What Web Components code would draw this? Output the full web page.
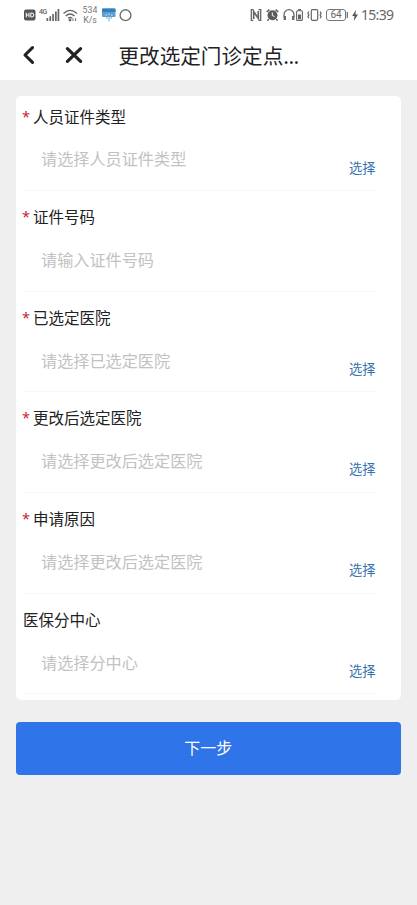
<!DOCTYPE html>
<html lang="zh-CN">
<head>
<meta charset="utf-8">
<title>更改选定门诊定点</title>
<style>
html,body{margin:0;height:100%}
body{background:#efefef;font-family:"Noto Sans CJK SC",sans-serif;overflow:hidden}
</style>
</head>
<body>
<clinic-page></clinic-page>
<script>
function define(name, html){
  const t=document.createElement('template');
  t.innerHTML=html;
  customElements.define(name,class extends HTMLElement{
    constructor(){
      super();
      this.attachShadow({mode:'open'}).appendChild(t.content.cloneNode(true));
    }
  });
}

define('status-bar',`
<style>
:host{display:flex;justify-content:space-between;box-sizing:border-box;height:30px;padding:6px 24px 0 24px;color:#666;font-family:Roboto,sans-serif}
.g{display:flex;height:18px;align-items:center}
svg{display:block;flex:none;overflow:visible}
.net{font-size:8.8px;line-height:10px;text-align:center;width:16px;margin:0 4px 0 4px;color:#777;height:20px;white-space:nowrap}
.g4{font-size:7px;line-height:7px;width:8px;height:12px;font-weight:500;letter-spacing:-.6px;margin-left:3px}
.bat{display:flex;align-items:center;justify-content:center;box-sizing:border-box;width:20px;height:12px;border:1px solid #777;border-radius:3px;font-size:10px;line-height:10px;margin-left:4px}
.time{font:14px/18px "Noto Sans",sans-serif;letter-spacing:-.7px;width:32px;margin-left:3px;white-space:nowrap}
</style>
<div class="g">
<svg width="12" height="12" viewBox="0 0 12 12"><rect y=".5" width="11.5" height="11" rx="2" fill="#555"/><path d="M2.3 3.7v4.6M5 3.7v4.6M2.3 6H5M6.8 4v4h1a2 2 0 0 0 0-4z" stroke="#fff" stroke-width="1" fill="none"/></svg>
<span class="g4">4G</span>
<svg width="12" height="12" viewBox="0 0 12 12" fill="#666"><path d="M-.5 9h1.7v3h-1.7zM2.4 7.2h1.7V12H2.4zM5.2 5h1.7v7H5.2zM8 2.6h1.7V12H8zM10.6 0h1.7v12h-1.7z"/></svg>
<svg width="15" height="13" viewBox="0 0 15 13" style="margin-left:4px" fill="none" stroke="#666" stroke-width="1.3"><path d="M.5 4.5Q7-1.8 14 4.5M2.8 7Q7 3 11.5 7M5 9.3q2.2-1.8 4.3 0"/><circle cx="7" cy="11" r=".8" fill="#666"/><path d="M10 12V9.5M12.6 9.2v2.8" stroke-width="1"/></svg>
<div class="net">534<br>K/s</div>
<svg width="14" height="14" viewBox="0 0 14 14"><rect y=".5" width="13.5" height="8.5" rx="1" fill="#5a9fd2"/><path d="M0 1.5a1 1 0 0 1 1-1h11.5a1 1 0 0 1 1 1V4H0z" fill="#2f80bd"/><path d="M3.5 7h1.5M6.3 6.3h1.5M9 7h1.5" stroke="#d3e9f7"/><path d="M7 8.5V13.5M4.8 9v1.8M9.2 9v1.8" stroke="#83b9dc" stroke-width="1.2"/></svg>
<svg width="13" height="13" viewBox="0 0 13 13" style="margin-left:2.5px"><circle cx="6.5" cy="6.2" r="5.4" fill="none" stroke="#707070" stroke-width="1.4"/></svg>
</div>
<div class="g">
<svg width="12" height="12" viewBox="0 0 12 12" fill="none" stroke="#666"><path d="M3.5.7H1.3V11.3h2M8.5.7h2.2v10.6h-2" stroke-width="1.3"/><path d="M3.7 10V2.5L8.3 9.5V2" stroke-width="1.7"/></svg>
<svg width="13" height="12" viewBox="0 0 13 12" style="margin-left:4px"><circle cx="6.5" cy="6.3" r="5" fill="#5b5b5b"/><path d="M.6 3L3.4.7M12.4 3L9.6.7M2.8 10l-1.3 1.6M10.2 10l1.3 1.6" stroke="#5b5b5b" stroke-width="1.5"/><path d="M6.3 3.5v3l2.2 1" stroke="#fff" fill="none"/></svg>
<svg width="12" height="12" viewBox="0 0 12 12" style="margin-left:3.5px" fill="none" stroke="#666"><path d="M1 8V5.7a5 5 0 0 1 10 0V8" stroke-width="1.3"/><path d="M1.8 7v4M10.2 7v4" stroke-width="2.3"/></svg>
<svg width="7" height="12" viewBox="0 0 7 12" style="margin-left:1px"><rect x=".6" y="1.8" width="5.8" height="9.6" rx="1" fill="none" stroke="#666" stroke-width="1.1"/><path d="M2 .7h3" stroke="#666" stroke-width="1.4"/><path d="M2 5.5h3v4.7H2z" fill="#666"/></svg>
<svg width="15" height="12" viewBox="0 0 15 12" style="margin-left:4.5px" fill="none" stroke="#666"><rect x="4.3" y=".7" width="6.4" height="10.6" rx="1.2" stroke-width="1.2"/><path d="M1.9 2.5l-1 1.7 1 1.7-1 1.7 1 1.7M13.1 2.5l1 1.7-1 1.7 1 1.7-1 1.7" stroke-width="1.2"/></svg>
<div class="bat">64</div>
<svg width="3" height="6" viewBox="0 0 3 6"><path d="M1.3 0v6" stroke="#666" stroke-width="1.2"/></svg>
<svg width="6" height="11" viewBox="0 0 6 11" style="margin-left:3px"><path d="M3.8 0L.2 6h2.3l-.7 5L6 4.5H3.5z" fill="#555"/></svg>
<span class="time">15:39</span>
</div>`);

define('nav-bar',`
<style>
:host{display:flex;align-items:center;box-sizing:border-box;height:50px;padding-left:22px;color:#222}
svg{display:block;flex:none}
h1{margin:0 0 0 35.5px;font-size:20.6px;line-height:30px;font-weight:400;white-space:nowrap;padding-bottom:1px}
.dots{letter-spacing:-.6px}
</style>
<svg width="13" height="20" viewBox="0 0 13 20"><path d="M10.5 2.6L3 10l7.5 7.4" fill="none" stroke="#222" stroke-width="3.1" stroke-linecap="round" stroke-linejoin="round"/></svg>
<svg width="18" height="18" viewBox="0 0 18 18" style="margin-left:30px"><path d="M2.4 2.6l13.2 12.8M15.6 2.6L2.4 15.4" stroke="#222" stroke-width="3.2" stroke-linecap="round"/></svg>
<h1><slot></slot><span class="dots">...</span></h1>`);

define('form-card',`
<style>
:host{display:block;box-sizing:border-box;height:603.5px;margin:16px 16.5px 0 16px;background:#fff;border-radius:5px}
</style><slot></slot>`);

define('form-field',`
<style>
:host{display:grid;grid-template-rows:42px 53px;box-sizing:border-box;height:100.65px;padding:0 25px 0 7px}
.label{display:flex;align-items:center;box-sizing:border-box;padding-bottom:3px;font-size:15.5px;line-height:24px;color:#222;height:42px}
.star{display:none;width:11px;margin-left:-1px;color:#c8202c;font:14.5px/20px "Noto Sans",sans-serif;flex:none}
:host([required]) .star{display:block}
.row{display:flex;justify-content:space-between;box-sizing:border-box;height:53px;padding-left:18px;border-bottom:1px solid #f7f7f7}
.ph{font-size:16.15px;line-height:24px;color:#c2c2c2;padding-top:8.3px}
.pick{font-size:13.3px;line-height:20px;color:#3672ae;padding-top:19.5px}
</style>
<div class="label"><span class="star">*</span><slot name="label"></slot></div>
<div class="row"><div class="ph"><slot></slot></div><div class="pick"><slot name="action"></slot></div></div>`);

define('primary-button',`
<style>
:host{display:block;margin:22.5px 16.5px 0 16px}
button{display:block;width:100%;height:53px;padding:0 0 4px;border:0;border-radius:4px;background:#2f74e8;color:#fff;font:16px/24px "Noto Sans CJK SC",sans-serif}
</style><button><slot></slot></button>`);

define('clinic-page',`
<style>
:host{display:block;min-height:905px;background:#efefef}
header{background:#fff;height:80px}
</style>
<header><status-bar></status-bar><nav-bar>更改选定门诊定点</nav-bar></header>
<form-card>
<form-field required><span slot="label">人员证件类型</span>请选择人员证件类型<span slot="action">选择</span></form-field>
<form-field required><span slot="label">证件号码</span>请输入证件号码</form-field>
<form-field required><span slot="label">已选定医院</span>请选择已选定医院<span slot="action">选择</span></form-field>
<form-field required><span slot="label">更改后选定医院</span>请选择更改后选定医院<span slot="action">选择</span></form-field>
<form-field required><span slot="label">申请原因</span>请选择更改后选定医院<span slot="action">选择</span></form-field>
<form-field><span slot="label">医保分中心</span>请选择分中心<span slot="action">选择</span></form-field>
</form-card>
<primary-button>下一步</primary-button>`);
</script>
</body>
</html>
